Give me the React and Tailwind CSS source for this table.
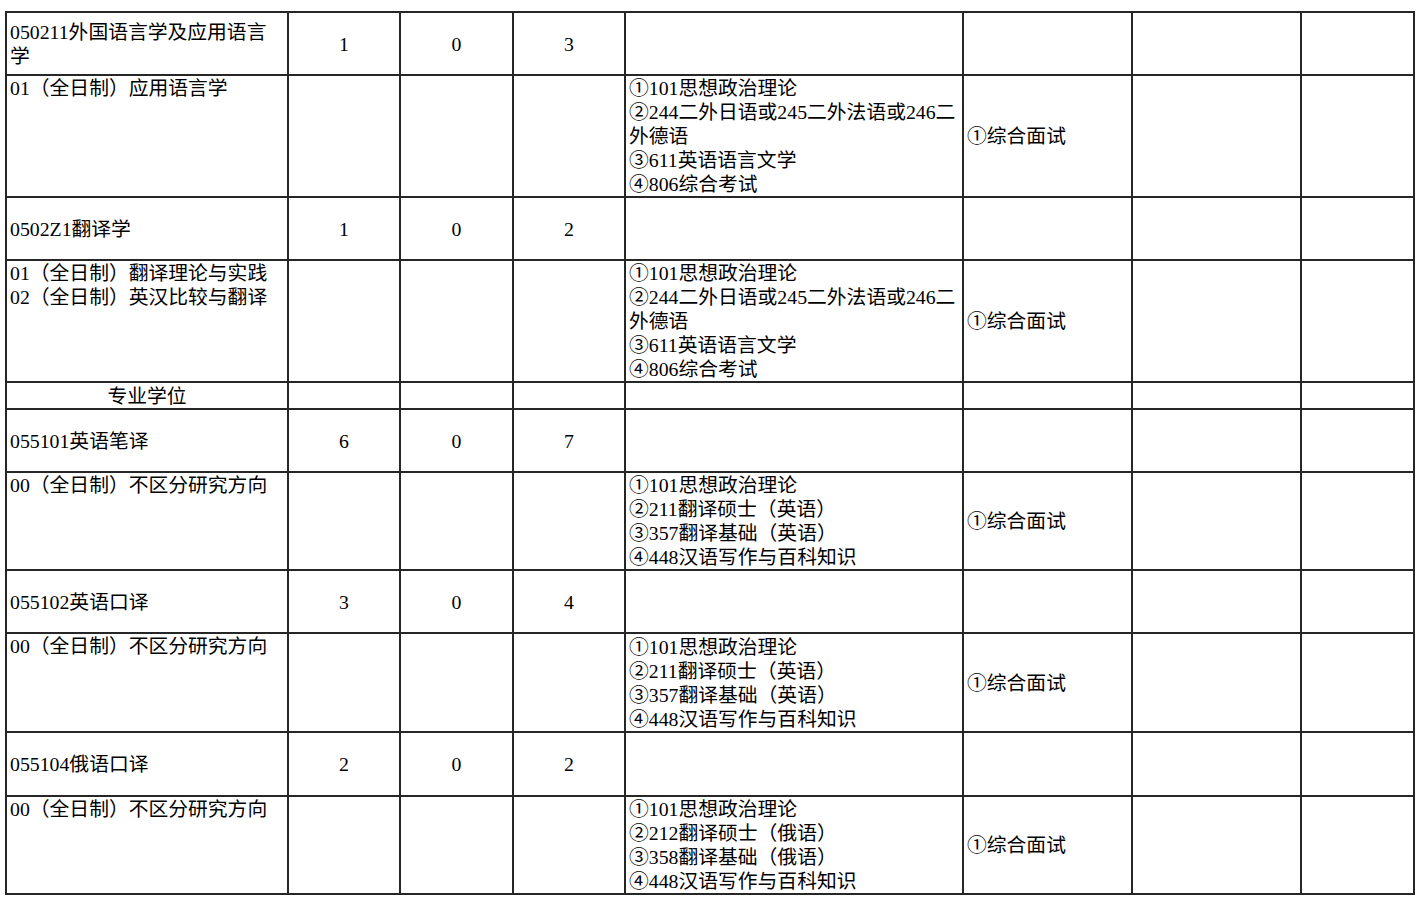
// Admissions catalogue table — majors, quotas, exam subjects, retest.

const FONT = { fontFamily: '"Liberation Serif", "Noto Sans CJK SC", serif' }

const rows = [
  { kind: 'major', h: 'h-[63px]', name: ['050211外国语言学及应用语言', '学'], nums: ['1', '0', '3'] },
  {
    kind: 'dir', h: 'h-[122px]', name: ['01（全日制）应用语言学'],
    exams: ['①101思想政治理论', '②244二外日语或245二外法语或246二', '外德语', '③611英语语言文学', '④806综合考试'],
    retest: '①综合面试',
  },
  { kind: 'major', h: 'h-[63px]', name: ['0502Z1翻译学'], nums: ['1', '0', '2'] },
  {
    kind: 'dir', h: 'h-[121px]', name: ['01（全日制）翻译理论与实践', '02（全日制）英汉比较与翻译'],
    exams: ['①101思想政治理论', '②244二外日语或245二外法语或246二', '外德语', '③611英语语言文学', '④806综合考试'],
    retest: '①综合面试',
  },
  { kind: 'section', h: 'h-[27px]', name: ['专业学位'] },
  { kind: 'major', h: 'h-[63px]', name: ['055101英语笔译'], nums: ['6', '0', '7'] },
  {
    kind: 'dir', h: 'h-[98px]', name: ['00（全日制）不区分研究方向'],
    exams: ['①101思想政治理论', '②211翻译硕士（英语）', '③357翻译基础（英语）', '④448汉语写作与百科知识'],
    retest: '①综合面试',
  },
  { kind: 'major', h: 'h-[63px]', name: ['055102英语口译'], nums: ['3', '0', '4'] },
  {
    kind: 'dir', h: 'h-[99px]', name: ['00（全日制）不区分研究方向'],
    exams: ['①101思想政治理论', '②211翻译硕士（英语）', '③357翻译基础（英语）', '④448汉语写作与百科知识'],
    retest: '①综合面试',
  },
  { kind: 'major', h: 'h-[64px]', name: ['055104俄语口译'], nums: ['2', '0', '2'] },
  {
    kind: 'dir', h: 'h-[97px]', name: ['00（全日制）不区分研究方向'],
    exams: ['①101思想政治理论', '②212翻译硕士（俄语）', '③358翻译基础（俄语）', '④448汉语写作与百科知识'],
    retest: '①综合面试',
  },
]

const cell = 'border-2 border-[#262626] px-[3px] p-0'

function Lines({ items }) {
  return items.map((t, i) => (
    <div key={i} className="whitespace-nowrap">{t}</div>
  ))
}

function Row({ row }) {
  if (row.kind === 'section') {
    return (
      <tr className={row.h}>
        <td className={`${cell} text-center align-middle`}>{row.name[0]}</td>
        {Array.from({ length: 7 }).map((_, i) => <td key={i} className={cell} />)}
      </tr>
    )
  }
  if (row.kind === 'major') {
    return (
      <tr className={row.h}>
        <td className={`${cell} align-middle`}><Lines items={row.name} /></td>
        {row.nums.map((n, i) => (
          <td key={i} className={`${cell} text-center align-middle`}>{n}</td>
        ))}
        {Array.from({ length: 4 }).map((_, i) => <td key={i} className={cell} />)}
      </tr>
    )
  }
  return (
    <tr className={row.h}>
      <td className={`${cell} align-top`}><Lines items={row.name} /></td>
      <td className={cell} />
      <td className={cell} />
      <td className={cell} />
      <td className={`${cell} align-middle`}><Lines items={row.exams} /></td>
      <td className={`${cell} align-middle`}>{row.retest}</td>
      <td className={cell} />
      <td className={cell} />
    </tr>
  )
}

export default function App() {
  return (
    <div className="min-h-screen bg-white pt-[11px] pl-[5px] text-black" style={FONT}>
      <table className="border-collapse table-fixed w-[1410px] text-[19.8px] leading-[24px]">
        <colgroup>
          <col className="w-[282px]" />
          <col className="w-[112px]" />
          <col className="w-[113px]" />
          <col className="w-[112px]" />
          <col className="w-[338px]" />
          <col className="w-[169px]" />
          <col className="w-[169px]" />
          <col className="w-[113px]" />
        </colgroup>
        <tbody>
          {rows.map((r, i) => <Row key={i} row={r} />)}
        </tbody>
      </table>
    </div>
  )
}
